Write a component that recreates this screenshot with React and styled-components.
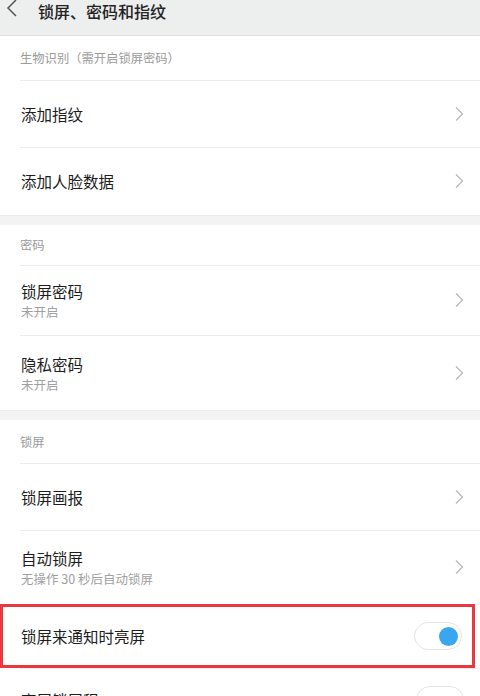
import React from 'react'
import styled, { createGlobalStyle } from 'styled-components'

const GlobalStyle = createGlobalStyle`
    html, body {
        margin: 0;
        padding: 0;
        background: #ffffff;
        font-family: "Noto Sans CJK SC", "Noto Sans", sans-serif;
    }
`

const Page = styled.div`
    width: 480px;
    height: 696px;
    overflow: hidden;
    background: #ffffff;
`

const TopBar = styled.div`
    height: 36px;
    background: #edeeee;
    border-bottom: 1px solid #dedfdf;
    box-sizing: border-box;
    display: flex;
    align-items: flex-start;
    padding: 0 0 0 6px;
`

const BackButton = styled.div`
    width: 24px;
    height: 22px;
    display: flex;
    align-items: center;
    justify-content: flex-start;
    margin-top: -3px;
`

const Title = styled.div`
    font-size: 16px;
    font-weight: 500;
    line-height: 20px;
    color: #222222;
    margin-left: 8px;
    margin-top: 1px;
`

const Section = styled.div`
    background: #ffffff;
`

const Gap = styled.div`
    height: 10px;
    background: #f3f3f3;
    border-top: 1px solid #ececec;
    box-sizing: border-box;
`

const SectionHeader = styled.div`
    height: ${({ h }) => h || 42}px;
    padding-left: 20px;
    display: flex;
    align-items: center;
    font-size: 12.3px;
    color: #9a9a9a;
`

const Row = styled.div`
    position: relative;
    height: ${({ h }) => h}px;
    display: flex;
    align-items: center;
    justify-content: space-between;
    padding: 0 16px 0 21px;
    box-sizing: border-box;
    &::before {
        content: "";
        position: absolute;
        top: 0;
        left: 20px;
        right: 0;
        border-top: 1px solid #ececec;
    }
`

const MarkedRow = styled(Row)`
    margin-right: 5px;
    border: 3px solid #e63a3f;
    padding: 0 10px 0 18px;
    &::before {
        display: none;
    }
`

const RowText = styled.div`
    display: flex;
    flex-direction: column;
    gap: 2px;
`

const RowTitle = styled.div`
    font-size: 15.5px;
    line-height: 22px;
    color: #1c1c1c;
`

const RowSub = styled.div`
    font-size: 12.5px;
    line-height: 16px;
    color: #a0a0a0;
`

const Toggle = styled.div`
    width: 48px;
    height: 28px;
    border-radius: 14px;
    border: 1px solid #e4e4e4;
    box-sizing: border-box;
    background: #ffffff;
    display: flex;
    align-items: center;
    justify-content: ${({ on }) => on ? 'flex-end' : 'flex-start'};
    padding: 0 3px;
`

const Knob = styled.div`
    width: 19px;
    height: 19px;
    border-radius: 50%;
    background: ${({ on }) => on ? '#39a7f0' : '#ffffff'};
`

const Chevron = () => (
    <svg width="10" height="16" viewBox="0 0 10 16">
        <path d="M2 1.5 L8.5 8 L2 14.5" fill="none" stroke="#b8b8b8" strokeWidth="1.3" />
    </svg>
)

const BackArrow = () => (
    <svg width="12" height="18" viewBox="0 0 12 18">
        <path d="M10 1 L2 9 L10 17" fill="none" stroke="#555555" strokeWidth="1.5" />
    </svg>
)

const NavRow = ({ title, sub, h }) => (
    <Row h={h}>
        <RowText>
            <RowTitle>{title}</RowTitle>
            {sub && <RowSub>{sub}</RowSub>}
        </RowText>
        <Chevron />
    </Row>
)

export default function App() {
    return (
        <Page>
            <GlobalStyle />
            <TopBar>
                <BackButton><BackArrow /></BackButton>
                <Title>锁屏、密码和指纹</Title>
            </TopBar>

            <Section>
                <SectionHeader h={44}>生物识别（需开启锁屏密码）</SectionHeader>
                <NavRow title="添加指纹" h={67} />
                <NavRow title="添加人脸数据" h={68} />
            </Section>
            <Gap />

            <Section>
                <SectionHeader h={40}>密码</SectionHeader>
                <NavRow title="锁屏密码" sub="未开启" h={70} />
                <NavRow title="隐私密码" sub="未开启" h={75} />
            </Section>
            <Gap />

            <Section>
                <SectionHeader h={43}>锁屏</SectionHeader>
                <NavRow title="锁屏画报" h={67} />
                <NavRow title="自动锁屏" sub="无操作 30 秒后自动锁屏" h={74} />
                <MarkedRow h={64}>
                    <RowTitle>锁屏来通知时亮屏</RowTitle>
                    <Toggle on>
                        <Knob on />
                    </Toggle>
                </MarkedRow>
                <Row h={64}>
                    <RowTitle>亮屏锁屏程</RowTitle>
                    <Toggle>
                        <Knob />
                    </Toggle>
                </Row>
            </Section>
        </Page>
    )
}
